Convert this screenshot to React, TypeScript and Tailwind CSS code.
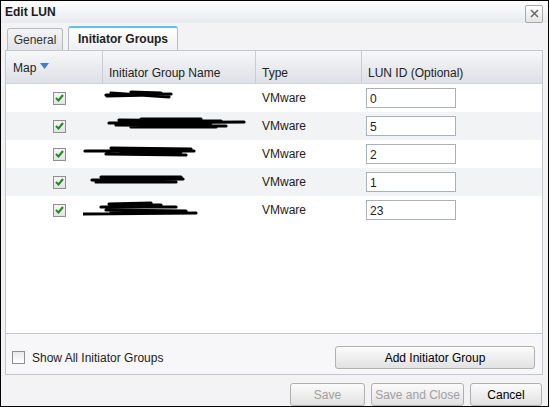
import React from 'react';

// scribble coordinates are in page x (the cell starts at x=102)
const rows = [
  { lun: '0', scribble: 'M105 6 L170 5 M110 4 L168 8 M106 7 L150 6 M130 3 L160 4' },
  { lun: '5', scribble: 'M108 6 L243 5 M118 3 L220 4 M115 8 L225 9 M125 5 L210 6 M140 2 L200 2 M130 10 L215 10' },
  { lun: '2', scribble: 'M84 6 L193 6 M110 3 L190 4 M105 9 L185 10 M120 7 L180 7 M112 5 L188 5' },
  { lun: '1', scribble: 'M91 7 L182 6 M100 4 L180 4 M95 9 L175 9 M105 6 L178 6' },
  { lun: '23', scribble: 'M82 13 L195 12 M108 3 L150 2 M100 6 L175 6 M105 9 L185 10 M110 11 L170 11 M115 4 L160 4' },
];

function Check({ checked }: { checked?: boolean }) {
  return (
    <div className="w-[13px] h-[13px] border border-[#8e8f8f] bg-gradient-to-b from-[#f6f6f6] to-[#e2e2e2] flex items-center justify-center">
      {checked && (
        <svg width="9" height="8" viewBox="0 0 9 8">
          <path d="M1 4 L3.5 6.5 L8 1" fill="none" stroke="#1f8a1f" strokeWidth="2" />
        </svg>
      )}
    </div>
  );
}

function Btn({ label, w, disabled }: { label: string; w: string; disabled?: boolean }) {
  return (
    <button
      className={`${w} h-[23px] rounded-[3px] border border-[#b0b0b0] bg-gradient-to-b from-[#fbfbfb] to-[#e2e2e2] text-[12px] ${disabled ? 'text-[#a0a0a0]' : 'text-black'}`}
    >
      {label}
    </button>
  );
}

export default function App() {
  return (
    <div
      className="w-[549px] h-[407px] border border-black bg-[#f3f3f5] flex flex-col overflow-hidden"
      style={{ fontFamily: '"Liberation Sans", Arial, sans-serif' }}
    >
      {/* title bar */}
      <div className="h-[22px] shrink-0 flex items-center justify-between pl-[4px] pr-[5px] bg-gradient-to-b from-white to-[#e9eaed]">
        <span className="text-[12px] font-bold text-[#1a1a1a]">Edit LUN</span>
        <div className="w-[18px] h-[18px] mt-[3px] border border-[#a8a8a8] rounded-[2px] bg-gradient-to-b from-white to-[#e4e4e4] flex items-center justify-center">
          <svg width="9" height="9" viewBox="0 0 9 9">
            <path d="M1 1 L8 8 M8 1 L1 8" stroke="#6b6b6b" strokeWidth="1.6" />
          </svg>
        </div>
      </div>

      {/* tabs */}
      <div className="h-[27px] shrink-0 flex items-end gap-[5px] pl-[6px]">
        <div className="w-[56px] h-[22px] border border-b-0 border-[#b7bac0] rounded-t-[3px] bg-gradient-to-b from-[#f3f4f6] to-[#e1e3e7] flex items-center justify-center text-[12px] text-[#333]">
          General
        </div>
        <div className="w-[110px] h-[24px] border border-b-0 border-[#b7bac0] border-t-[2px] border-t-[#5fc3e6] rounded-t-[3px] bg-gradient-to-b from-white to-[#eef0f3] flex items-center justify-center text-[12px] font-bold text-[#222]">
          Initiator Groups
        </div>
      </div>

      {/* panel */}
      <div className="mx-[4px] w-[538px] h-[325px] shrink-0 border border-[#c3c6cb] bg-[#f7f7f9] flex flex-col">
        <div className="h-[283px] shrink-0 bg-white border-b border-[#c3c6cb] flex flex-col">
          {/* header */}
          <div className="h-[33px] shrink-0 flex text-[12px] text-[#222] bg-gradient-to-b from-[#f6f7f9] to-[#dde0e5] border-b border-[#d0d3d8]">
            <div className="w-[97px] border-r border-[#c9ccd1] pl-[7px] pt-[8px] flex items-start gap-[4px]">
              Map
              <svg width="9" height="6" viewBox="0 0 9 6" className="mt-[4px]">
                <path d="M0 0 L9 0 L4.5 6 Z" fill="#3d7fc9" />
              </svg>
            </div>
            <div className="w-[153px] border-r border-[#c9ccd1] pl-[6px] pt-[13px]">Initiator Group Name</div>
            <div className="w-[106px] border-r border-[#c9ccd1] pl-[6px] pt-[13px]">Type</div>
            <div className="flex-1 pl-[6px] pt-[13px]">LUN ID (Optional)</div>
          </div>
          {rows.map((r, i) => (
            <div key={i} className={`h-[28px] shrink-0 flex items-center text-[12px] text-[#222] ${i % 2 === 1 ? 'bg-[#f2f3f5]' : 'bg-white'}`}>
              <div className="w-[97px] flex justify-center pl-[10px]">
                <Check checked />
              </div>
              <div className="w-[153px] h-full relative">
                <svg width="170" height="16" viewBox="82 0 170 16" className="absolute left-[-20px] top-[5px]">
                  <path d={r.scribble} fill="none" stroke="black" strokeWidth="3.2" strokeLinecap="round" />
                </svg>
              </div>
              <div className="w-[106px] pl-[6px]">VMware</div>
              <div className="flex-1 pl-[4px]">
                <div className="w-[90px] h-[20px] border border-[#a9b0b8] bg-white pl-[3px] pt-[3px] leading-[14px] text-[12px]">{r.lun}</div>
              </div>
            </div>
          ))}
        </div>
        <div className="flex-1 flex items-start justify-between pl-[6px] pr-[7px] pt-[12px]">
          <div className="h-[23px] flex items-center gap-[7px] text-[12px] text-[#222]">
            <div className="w-[13px] h-[13px] border border-[#8e8f8f] bg-gradient-to-b from-[#e9e9e9] to-white" />
            Show All Initiator Groups
          </div>
          <Btn label="Add Initiator Group" w="w-[200px]" />
        </div>
      </div>

      {/* footer */}
      <div className="flex-1 flex items-start justify-end gap-[6px] pr-[6px] pt-[8px]">
        <Btn label="Save" w="w-[75px]" disabled />
        <Btn label="Save and Close" w="w-[93px]" disabled />
        <Btn label="Cancel" w="w-[72px]" />
      </div>
    </div>
  );
}
